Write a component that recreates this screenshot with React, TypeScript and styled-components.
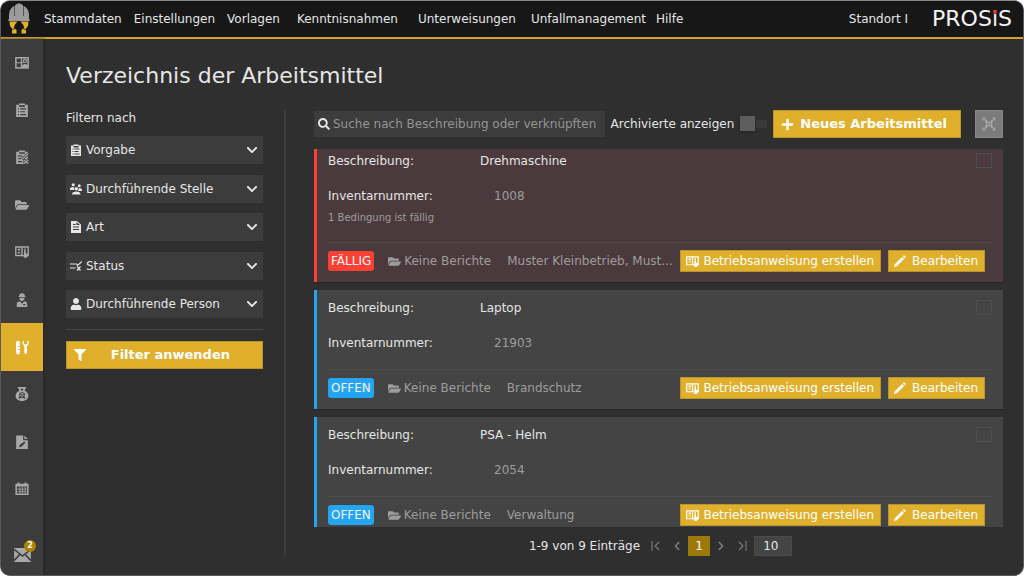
import React from "react";
import styled, { createGlobalStyle } from "styled-components";
import {
  FaChevronDown,
  FaFilter,
  FaFolderOpen,
  FaPlus,
  FaSearch,
  FaUser,
  FaChevronLeft,
  FaChevronRight,
} from "react-icons/fa";

const color = {
  gold: "#e0b02c",
  goldDark: "#9c790a",
  page: "#2f2f2f",
  bar: "#171717",
  panel: "#3c3c3c",
  card: "#444444",
  cardDue: "#4b3a3d",
  line: "#4b4b4b",
  text: "#e6e6e6",
  muted: "#9d9d9d",
  red: "#f94034",
  blue: "#23a5f2",
};

const GlobalStyle = createGlobalStyle`
  * { box-sizing: border-box; }
  body { margin: 0; background: #fff; }
  body, button, input, select {
    font-family: Verdana, "DejaVu Sans", sans-serif;
    font-size: 12px;
    line-height: 16px;
  }
  button { cursor: pointer; }
  svg { display: block; flex: none; }
`;

const Shell = styled.div`
  height: 100vh;
  display: flex;
  flex-direction: column;
  overflow: hidden;
  border: 1px solid #5a5c5c;
  border-top-color: #858987;
  border-radius: 10px;
  background: ${color.page};
  color: ${color.text};
`;

const TopBar = styled.header`
  flex: none;
  height: 38px;
  display: flex;
  align-items: center;
  padding: 0 11px 0 6px;
  background: ${color.bar};
  border-bottom: 2px solid #cfa32a;
`;

const MainMenu = styled.nav`
  flex: 1;
  display: flex;
  padding-left: 13px;
`;

const MenuLink = styled.a<{ $gap: number }>`
  color: ${color.text};
  text-decoration: none;
  white-space: nowrap;
  margin-right: ${(p) => p.$gap}px;
`;

const Brand = styled.div`
  position: relative;
  margin-left: 24px;
  font-family: "DejaVu Sans", sans-serif;
  font-size: 22px;
  line-height: 24px;
  color: #f4f4f4;
`;

const BrandI = styled.span`
  position: relative;
  &::after {
    content: "";
    position: absolute;
    left: 1px;
    top: 4px;
    width: 4px;
    height: 4px;
    border-radius: 50%;
    background: #e3342b;
  }
`;

const Body = styled.div`
  flex: 1;
  min-height: 0;
  display: flex;
`;

const SideBar = styled.aside`
  flex: none;
  width: 42px;
  display: flex;
  flex-direction: column;
  justify-content: space-between;
  background: ${color.panel};
  box-shadow: 1px 0 2px #262626;
`;

const SideNav = styled.nav`
  height: 474px;
  display: grid;
  grid-auto-rows: 1fr;
`;

const SideLink = styled.a<{ $active?: boolean }>`
  display: flex;
  align-items: center;
  justify-content: center;
  color: ${(p) => (p.$active ? "#fff" : "#a8a8a8")};
  background: ${(p) => (p.$active ? color.gold : "transparent")};
`;

const MailLink = styled.a`
  position: relative;
  display: flex;
  justify-content: center;
  padding-bottom: 13px;
  color: #a8a8a8;
`;

const MailCount = styled.span`
  position: absolute;
  top: -8px;
  right: 7px;
  width: 12px;
  height: 12px;
  border-radius: 50%;
  background: #ad8204;
  color: #fff;
  font-size: 8px;
  font-weight: bold;
  line-height: 12px;
  text-align: center;
`;

const Content = styled.main`
  flex: 1;
  min-width: 0;
  display: flex;
  flex-direction: column;
  padding: 23px 20px 19px 23px;
`;

const Title = styled.h1`
  margin: 0 0 20px;
  font-size: 22px;
  line-height: 28px;
  font-weight: normal;
`;

const Columns = styled.div`
  flex: 1;
  min-height: 0;
  display: flex;
`;

const FilterPanel = styled.form`
  flex: none;
  width: 220px;
  padding-right: 21px;
  border-right: 2px solid #3d3d3d;
`;

const FilterHeading = styled.div`
  padding-bottom: 10px;
`;

const FilterList = styled.div`
  height: 182px;
  display: flex;
  flex-direction: column;
  justify-content: space-between;
`;

const FilterField = styled.label`
  display: grid;
  align-items: center;
  height: 28px;
  background: ${color.panel};
  & > * {
    grid-row: 1;
    grid-column: 1;
  }
  & > svg {
    margin-left: 4px;
    pointer-events: none;
  }
  & > svg:last-child {
    margin-left: 0;
    margin-right: 5px;
    justify-self: end;
  }
`;

const FilterSelect = styled.select`
  appearance: none;
  width: 100%;
  height: 28px;
  padding: 0 24px 0 20px;
  border: 0;
  border-radius: 0;
  background: transparent;
  color: ${color.text};
`;

const Rule = styled.hr`
  margin: 11px 0;
  border: 0;
  border-top: 1px solid #454545;
`;

const GoldButton = styled.button`
  display: flex;
  align-items: center;
  height: 28px;
  padding: 0 13px 0 7px;
  border: 1px solid #b9952f;
  background: ${color.gold};
  color: #fff;
  font-size: 13px;
  font-weight: bold;
  white-space: nowrap;
`;

const ApplyButton = styled(GoldButton)`
  width: 100%;
  padding: 0 32px 0 7px;
  justify-content: space-between;
`;

const NewButton = styled(GoldButton)`
  gap: 6px;
  margin: 0 14px 0 6px;
`;

const CardButton = styled(GoldButton)`
  height: 22px;
  min-width: 97px;
  justify-content: space-between;
  padding: 0 6px 0 5px;
  gap: 4px;
  font-size: 12px;
  font-weight: normal;
`;

const ListPanel = styled.section`
  flex: 1;
  min-width: 0;
  display: flex;
  flex-direction: column;
  padding-left: 28px;
`;

const Toolbar = styled.div`
  flex: none;
  display: flex;
  align-items: center;
  margin-bottom: 11px;
`;

const SearchBox = styled.label`
  flex: 1;
  min-width: 0;
  height: 26px;
  display: flex;
  align-items: center;
  gap: 3px;
  padding: 0 7px 0 4px;
  background: ${color.panel};
`;

const SearchInput = styled.input`
  flex: 1;
  min-width: 0;
  padding: 0;
  border: 0;
  outline: 0;
  background: transparent;
  color: ${color.text};
  &::placeholder {
    color: #949494;
    opacity: 1;
  }
`;

const ArchiveToggle = styled.label`
  display: flex;
  align-items: center;
  gap: 6px;
  margin-left: 6px;
  white-space: nowrap;
`;

const Switch = styled.input`
  appearance: none;
  position: relative;
  width: 27px;
  height: 8px;
  margin: 0;
  background: #3a3a3a;
  &::before {
    content: "";
    position: absolute;
    left: 0;
    top: -4px;
    width: 15px;
    height: 15px;
    background: #5e5e60;
    box-shadow: 0 1px 2px #222;
  }
`;

const ScanButton = styled.button`
  flex: none;
  width: 28px;
  height: 28px;
  display: flex;
  align-items: center;
  justify-content: center;
  padding: 0;
  border: 1px solid #868686;
  background: #7b7b7b;
  color: #a8a8a8;
`;

const CardList = styled.div`
  flex: 1;
  min-height: 0;
  overflow: hidden;
`;

const Card = styled.article<{ $due?: boolean }>`
  margin-bottom: 8px;
  padding: ${(p) => (p.$due ? 4 : 10)}px 11px 10px;
  border-left: 3px solid ${(p) => (p.$due ? color.red : color.blue)};
  background: ${(p) => (p.$due ? color.cardDue : color.card)};
  box-shadow: 0 1px 1px #262626;
`;

const CardHead = styled.div`
  display: flex;
  justify-content: space-between;
  align-items: flex-start;
`;

const Facts = styled.dl`
  display: grid;
  grid-template-columns: 152px auto;
  row-gap: 19px;
  margin: 0;
`;

const Term = styled.dt``;

const Value = styled.dd<{ $muted?: boolean }>`
  margin: 0;
  padding-left: ${(p) => (p.$muted ? 14 : 0)}px;
  color: ${(p) => (p.$muted ? color.muted : color.text)};
`;

const SelectBox = styled.input`
  appearance: none;
  width: 16px;
  height: 15px;
  margin: 0;
  border: 1px solid #4f4e4e;
`;

const Note = styled.p`
  margin: 7px 0 0;
  color: ${color.muted};
  font-size: 10px;
  line-height: 13px;
`;

const CardFoot = styled.footer`
  display: flex;
  align-items: center;
  margin-top: 18px;
  padding: 7px 7px 0 0;
  border-top: 1px solid ${color.line};
  color: ${color.muted};
  white-space: nowrap;
`;

const Badge = styled.span<{ $due?: boolean }>`
  padding: 2px 3px;
  border-radius: 3px;
  background: ${(p) => (p.$due ? color.red : color.blue)};
  color: #f4f4f4;
`;

const Reports = styled.span`
  display: flex;
  align-items: center;
  gap: 3px;
  margin: 0 16px 0 14px;
`;

const Place = styled.span`
  flex: 1;
`;

const Actions = styled.div`
  display: flex;
  gap: 7px;
  margin-left: 4px;
`;

const Pager = styled.nav`
  flex: none;
  display: flex;
  justify-content: center;
  align-items: center;
  height: 20px;
  margin-top: 9px;
  padding-left: 4px;
`;

const PagerText = styled.span`
  margin-right: 4px;
`;

const PageStep = styled.button`
  width: 22px;
  height: 20px;
  display: flex;
  align-items: center;
  justify-content: center;
  padding: 0;
  border: 0;
  background: transparent;
  color: #7a7a7a;
`;

const PageCurrent = styled(PageStep)`
  background: ${color.goldDark};
  color: #fff;
`;

const PageSize = styled.select`
  appearance: none;
  width: 38px;
  height: 20px;
  padding: 0 8px;
  border: 1px solid #4b4b4b;
  border-radius: 0;
  background: ${color.card};
  color: ${color.text};
`;

type IconProps = { size?: number };

const HelmetLogo = () => (
  <svg width="24" height="32" viewBox="0 0 24 32" aria-hidden="true">
    <path
      fill="#9b9b9b"
      d="M1 18 2 15.500V12C2 7.500 4 4.500 7 3V13H8V2.500L9 1.500C10 .6 11 .5 12 .5S14 .6 15 1.500L16 2.500V13H17V3C20 4.500 22 7.500 22 12V15.500L23 18Z"
    />
    <path fill="#555" d="M7 3h1v10H7zM16 3h1v10h-1z" />
    <path
      fill={color.gold}
      d="M2.500 18.500H10.500L8 21.500 6.800 24.500 9.500 27V30.500H5V25.500L3 23ZM21.500 18.500H13.500L16 21.500 17.200 24.500 14.500 27V30.500H19V25.500L21 23Z"
    />
    <path stroke="#171717" strokeWidth=".8" d="m4.500 27 3.500-1.500M19.500 27l-3.500-1.500" />
  </svg>
);

const IconBoard = ({ size = 14 }: IconProps) => (
  <svg width={size} height={size} viewBox="0 0 24 24" fill="none" stroke="currentColor" aria-hidden="true">
    <rect x="1.500" y="3" width="21" height="17.500" strokeWidth="2.600" />
    <path d="M11 3v17.500M1.500 11.500h13" strokeWidth="2" />
    <circle cx="17" cy="8.500" r="2.600" strokeWidth="2" />
    <path d="M12 17.500c0-5 10-5 10 0v2H12Z" fill="currentColor" stroke="none" />
  </svg>
);

const IconClipboard = ({ size = 14 }: IconProps) => (
  <svg width={size} height={size} viewBox="0 0 24 24" aria-hidden="true">
    <path
      fill="currentColor"
      fillRule="evenodd"
      d="M2 3h5V1h10v2h5v21H2ZM7 4v3h10V4ZM5 9v2h2V9Zm4 0v2h10V9ZM5 14v2h2v-2Zm4 0v2h8v-2ZM5 19v2h2v-2Zm4 0v2h10v-2Z"
    />
  </svg>
);

const IconClipboardCheck = ({ size = 14 }: IconProps) => (
  <svg width={size} height={size} viewBox="0 0 24 24" aria-hidden="true">
    <path
      fill="currentColor"
      fillRule="evenodd"
      d="M2 3h5V1h10v2h5v21H2ZM7 4v2.500h10V4ZM5 9v2h4V9Zm0 5v2h5v-2Zm0 5v2h7v-2Z"
    />
    <path d="m9 10 5 4.500 9-8.500M15 17l8 6m0-6-8 6" fill="none" stroke={color.panel} strokeWidth="4.500" />
    <path d="m9 10 5 4.500 9-8.500M15 17l8 6m0-6-8 6" fill="none" stroke="currentColor" strokeWidth="2" />
  </svg>
);

const IconManual = ({ size = 14 }: IconProps) => (
  <svg width={size} height={size} viewBox="0 0 24 24" fill="none" stroke="currentColor" aria-hidden="true">
    <path d="M14 18H1.300V3.500H22.700V18H21M12 3.500V17" strokeWidth="2.300" />
    <path d="M4.500 8h4.500M4.500 13h4.500M7 6v4" strokeWidth="2" />
    <path d="M17 6v8" strokeWidth="2.400" />
    <path fill="currentColor" stroke="none" d="M15.500 11h2.500v3l4 1v4l-2 3h-4l-3-4.500 2.500-.5Z" />
  </svg>
);

const IconWorker = ({ size = 14 }: IconProps) => (
  <svg width={size} height={size} viewBox="0 0 24 24" fill="currentColor" aria-hidden="true">
    <path d="M7 5C7 2 9 .5 12 .5S17 2 17 5l1 1v1H6V6ZM7.500 8h9c0 3.500-2 5.500-4.500 5.500S7.500 11.500 7.500 8Z" />
    <path fillRule="evenodd" d="M3 24v-5c0-3 2-4.500 5-5l4 4 4-4c3 .5 5 2 5 5v5ZM14 19v2h4v-2Z" />
  </svg>
);

const IconTools = ({ size = 16 }: IconProps) => (
  <svg width={size} height={size} viewBox="0 0 24 24" fill="currentColor" aria-hidden="true">
    <path fillRule="evenodd" d="M4 3h4l1 3v13l-1 4H4l-1-4V6ZM6 7v1h3V7Zm0 4v1h3v-1Zm0 4v1h3v-1Z" />
    <path d="M13 3v4.500l2.500 3V20c0 3.500 4 3.500 4 0v-9.500l2.500-3V3h-2v4l-1.500 1h-2L15 7V3Z" />
  </svg>
);

const IconFlask = ({ size = 14 }: IconProps) => (
  <svg width={size} height={size} viewBox="0 0 24 24" fill="currentColor" aria-hidden="true">
    <path
      fillRule="evenodd"
      d="M5 0h14v3h-2v4c4 1.500 6 4.500 6 8 0 5-4 9-11 9S1 20 1 15c0-3.500 2-6.500 6-8V3H5ZM10 3v3h4V3ZM12 9c-3 0-5 1.500-5 4 0 1.500.5 2.500 1.500 3L6 18l1 2 5-2 5 2 1-2-2.500-2c1-.5 1.500-1.500 1.500-3 0-2.500-2-4-5-4Zm-3 4h2v2H9Zm4 0h2v2h-2Z"
    />
    <path d="M9.500 10.500h5v2h-5zM11 15h2v2h-2z" />
  </svg>
);

const IconFileEdit = ({ size = 14 }: IconProps) => (
  <svg width={size} height={size} viewBox="0 0 24 24" fill="currentColor" aria-hidden="true">
    <path fillRule="evenodd" d="M2 1h12v8h8v15H2ZM16 1l6 6h-6ZM8 17l-1 4 4-1 7-7-2-2Z" />
  </svg>
);

const IconCalendar = ({ size = 14 }: IconProps) => (
  <svg width={size} height={size} viewBox="0 0 24 24" fill="none" stroke="currentColor" aria-hidden="true">
    <path d="M2 4.500h20v16.500H2Z" strokeWidth="2.600" />
    <path d="M2 6h20M6 1v5M18 1v5" strokeWidth="3.400" />
    <path d="M4 12.300h16M4 16.600h16M8.500 8v12M13 8v12M17.500 8v12" strokeWidth="1.500" />
  </svg>
);

const IconMail = ({ size = 17 }: IconProps) => (
  <svg width={size} height="14" viewBox="0 0 24 20" aria-hidden="true">
    <path fill="currentColor" d="M0 0h24v20H0Z" />
    <path fill="none" stroke={color.panel} strokeWidth="2.200" d="m0 2 12 9.500L24 2M0 18l8.500-9M24 18l-8.500-9" />
  </svg>
);

const IconTeam = ({ size = 12 }: IconProps) => (
  <svg width={size} height={size} viewBox="0 0 24 24" fill="currentColor" aria-hidden="true">
    <circle cx="6.500" cy="3.500" r="3.200" />
    <circle cx="18.500" cy="5.500" r="3" />
    <circle cx="12.500" cy="11.500" r="3.600" />
    <path d="M0 13c0-4 2-5 7.500-5 0 3 .5 5 1.500 6H0ZM16 15c1-1 1.500-2 1.500-5 4.500 0 6.500 1.500 6.500 5v1h-8ZM4 23c0-4 3-6 8.500-6S21 19 21 23Z" />
  </svg>
);

const IconDocument = ({ size = 12 }: IconProps) => (
  <svg width={size} height={size} viewBox="0 0 24 24" fill="currentColor" aria-hidden="true">
    <path fillRule="evenodd" d="M2 0h12l8 7v17H2ZM13 2v6h7ZM6 11v2h12v-2Zm0 5v2h12v-2ZM6 6v2h5V6Z" />
  </svg>
);

const IconStatus = ({ size = 12 }: IconProps) => (
  <svg width={size} height={size} viewBox="0 0 24 24" fill="none" stroke="currentColor" strokeWidth="2.300" aria-hidden="true">
    <path d="M0 8h11M0 16h11M12 7l3 4 9-8M14 13l7 8m0-8-7 8" />
  </svg>
);

const IconPencil = ({ size = 12 }: IconProps) => (
  <svg width={size} height={size} viewBox="0 0 24 24" fill="currentColor" aria-hidden="true">
    <path d="M0 24 1.500 18.500 16 4l4 4L5.500 22.500ZM17.500 2.500 19.500.5c1-1 4.500 2.500 4 3.500l-2 2.500Z" />
  </svg>
);

const IconScan = ({ size = 14 }: IconProps) => (
  <svg width={size} height={size} viewBox="0 0 24 24" fill="none" stroke="currentColor" strokeWidth="2" aria-hidden="true">
    <path d="M2 6V2h4M18 2h4v4M22 18v4h-4M6 22H2v-4M4 4l6 6M20 4l-6 6M4 20l6-6M20 20l-6-6" />
    <path d="M8 5v14M16 5v14M5 9h14M5 15h14M12 8v8" />
  </svg>
);

const IconEdge = ({ last }: { last?: boolean }) => (
  <svg width="10" height="10" viewBox="0 0 10 10" fill="none" stroke="currentColor" strokeWidth="1.200" aria-hidden="true">
    <path d={last ? "M1 1l4 4-4 4M8 0v10" : "M9 1 5 5l4 4M2 0v10"} />
  </svg>
);

const menu = [
  { label: "Stammdaten", gap: 12 },
  { label: "Einstellungen", gap: 12 },
  { label: "Vorlagen", gap: 17 },
  { label: "Kenntnisnahmen", gap: 20 },
  { label: "Unterweisungen", gap: 15 },
  { label: "Unfallmanagement", gap: 10 },
  { label: "Hilfe", gap: 0 },
];

const sideItems = [
  { label: "Übersicht", icon: <IconBoard /> },
  { label: "Vorgaben", icon: <IconClipboard /> },
  { label: "Prüfungen", icon: <IconClipboardCheck /> },
  { label: "Dokumente", icon: <FaFolderOpen size={14} /> },
  { label: "Betriebsanweisungen", icon: <IconManual /> },
  { label: "Personen", icon: <IconWorker /> },
  { label: "Arbeitsmittel", icon: <IconTools />, active: true },
  { label: "Gefahrstoffe", icon: <IconFlask /> },
  { label: "Formulare", icon: <IconFileEdit /> },
  { label: "Kalender", icon: <IconCalendar /> },
];

const filters = [
  { label: "Vorgabe", icon: <IconClipboard size={12} /> },
  { label: "Durchführende Stelle", icon: <IconTeam /> },
  { label: "Art", icon: <IconDocument /> },
  { label: "Status", icon: <IconStatus /> },
  { label: "Durchführende Person", icon: <FaUser size={12} /> },
];

type Equipment = {
  name: string;
  number: string;
  place: string;
  due?: boolean;
  note?: string;
};

const equipment: Equipment[] = [
  {
    name: "Drehmaschine",
    number: "1008",
    place: "Muster Kleinbetrieb, Must...",
    due: true,
    note: "1 Bedingung ist fällig",
  },
  { name: "Laptop", number: "21903", place: "Brandschutz" },
  { name: "PSA - Helm", number: "2054", place: "Verwaltung" },
];

const EquipmentCard = ({ item }: { item: Equipment }) => (
  <Card $due={item.due}>
    <CardHead>
      <Facts>
        <Term>Beschreibung:</Term>
        <Value>{item.name}</Value>
        <Term>Inventarnummer:</Term>
        <Value $muted>{item.number}</Value>
      </Facts>
      <SelectBox type="checkbox" aria-label={`${item.name} auswählen`} />
    </CardHead>
    {item.note && <Note>{item.note}</Note>}
    <CardFoot>
      <Badge $due={item.due}>{item.due ? "FÄLLIG" : "OFFEN"}</Badge>
      <Reports>
        <FaFolderOpen size={13} />
        Keine Berichte
      </Reports>
      <Place>{item.place}</Place>
      <Actions>
        <CardButton type="button">
          <IconManual size={13} />
          Betriebsanweisung erstellen
        </CardButton>
        <CardButton type="button">
          <IconPencil />
          Bearbeiten
        </CardButton>
      </Actions>
    </CardFoot>
  </Card>
);

export default function App() {
  return (
    <>
      <GlobalStyle />
      <Shell>
        <TopBar>
          <HelmetLogo />
          <MainMenu>
            {menu.map((m) => (
              <MenuLink key={m.label} href="#" $gap={m.gap}>
                {m.label}
              </MenuLink>
            ))}
          </MainMenu>
          <span>Standort I</span>
          <Brand>
            PROS<BrandI>i</BrandI>S
          </Brand>
        </TopBar>
        <Body>
          <SideBar>
            <SideNav>
              {sideItems.map((s) => (
                <SideLink key={s.label} href="#" aria-label={s.label} $active={s.active}>
                  {s.icon}
                </SideLink>
              ))}
            </SideNav>
            <MailLink href="#" aria-label="Nachrichten">
              <IconMail />
              <MailCount>2</MailCount>
            </MailLink>
          </SideBar>
          <Content>
            <Title>Verzeichnis der Arbeitsmittel</Title>
            <Columns>
              <FilterPanel>
                <FilterHeading>Filtern nach</FilterHeading>
                <FilterList>
                  {filters.map((f) => (
                    <FilterField key={f.label}>
                      {f.icon}
                      <FilterSelect aria-label={f.label}>
                        <option>{f.label}</option>
                      </FilterSelect>
                      <FaChevronDown size={12} />
                    </FilterField>
                  ))}
                </FilterList>
                <Rule />
                <ApplyButton type="button">
                  <FaFilter size={12} />
                  Filter anwenden
                </ApplyButton>
              </FilterPanel>
              <ListPanel>
                <Toolbar>
                  <SearchBox>
                    <FaSearch size={12} />
                    <SearchInput
                      type="text"
                      aria-label="Suche"
                      placeholder="Suche nach Beschreibung oder verknüpften Elementen"
                    />
                  </SearchBox>
                  <ArchiveToggle>
                    Archivierte anzeigen
                    <Switch type="checkbox" />
                  </ArchiveToggle>
                  <NewButton type="button">
                    <FaPlus size={13} />
                    Neues Arbeitsmittel
                  </NewButton>
                  <ScanButton type="button" aria-label="Code scannen">
                    <IconScan />
                  </ScanButton>
                </Toolbar>
                <CardList>
                  {equipment.map((item) => (
                    <EquipmentCard key={item.number} item={item} />
                  ))}
                </CardList>
                <Pager aria-label="Seiten">
                  <PagerText>1-9 von 9 Einträge</PagerText>
                  <PageStep type="button" aria-label="Erste Seite">
                    <IconEdge />
                  </PageStep>
                  <PageStep type="button" aria-label="Vorherige Seite">
                    <FaChevronLeft size={10} />
                  </PageStep>
                  <PageCurrent type="button">1</PageCurrent>
                  <PageStep type="button" aria-label="Nächste Seite">
                    <FaChevronRight size={10} />
                  </PageStep>
                  <PageStep type="button" aria-label="Letzte Seite">
                    <IconEdge last />
                  </PageStep>
                  <PageSize aria-label="Einträge pro Seite">
                    <option>10</option>
                  </PageSize>
                </Pager>
              </ListPanel>
            </Columns>
          </Content>
        </Body>
      </Shell>
    </>
  );
}
